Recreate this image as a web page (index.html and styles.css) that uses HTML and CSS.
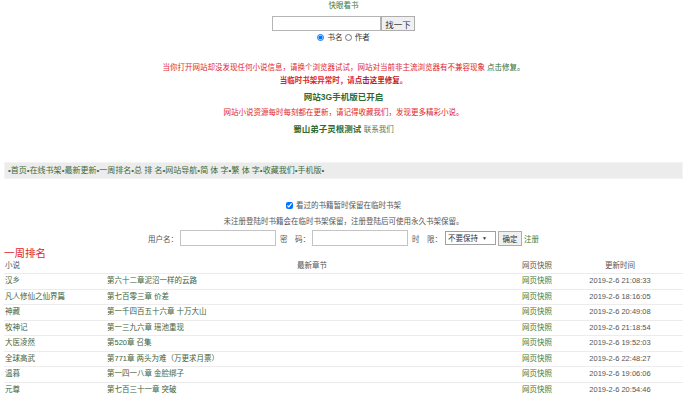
FILE: index.html
```html
<!DOCTYPE html>
<html lang="zh-CN">
<head>
    <meta charset="UTF-8">
    <meta name="viewport" content="width=device-width, initial-scale=1.0">
    <link rel="stylesheet" href="styles.css">
    <title>快眼看书</title>
</head>
<body>
    <div id="header">
        <div class="site-title">快眼看书</div>
        <form class="search">
            <input type="text" class="search-input"><button type="button" class="search-btn">找一下</button>
        </form>
        <div class="search-type">
            <label><input type="radio" name="type" checked> 书名</label>
            <label><input type="radio" name="type"> 作者</label>
        </div>
    </div>

    <div id="notice">
        <p class="red">当你打开网站却没发现任何小说信息，请换个浏览器试试，网站对当前非主流浏览器有不兼容现象 <a href="#" class="green-link">点击修复。</a></p>
        <p class="red bold">当临时书架异常时，请<a href="#" class="red-link">点击这里修复</a>。</p>
        <p class="big green">网站3G手机版已开启</p>
        <p class="red">网站小说资源每时每刻都在更新，请记得收藏我们，发现更多精彩小说。</p>
        <p class="big green">蜀山弟子灵根测试 <a href="#" class="small-link">联系我们</a></p>
    </div>

    <div id="nav">
        •<a href="#">首页</a>•<a href="#">在线书架</a>•<a href="#">最新更新</a>•<a href="#">一周排名</a>•<a href="#">总 排 名</a>•<a href="#">网站导航</a>•<a href="#">简 体 字</a>•<a href="#">繁 体 字</a>•<a href="#">收藏我们</a>•<a href="#">手机版</a>•
    </div>

    <div id="login">
        <div class="keep"><label><input type="checkbox" checked> 看过的书籍暂时保留在临时书架</label></div>
        <div class="tip">未注册登陆时书籍会在临时书架保留，注册登陆后可使用永久书架保留。</div>
        <form class="login-row">
            <span>用户名：</span><input type="text" class="login-input">
            <span>密　码：</span><input type="password" class="login-input">
            <span>时　限：</span>
            <div class="keep-select">不要保持 <span class="arrow">▼</span></div>
            <button type="button" class="login-btn">确定</button><a href="#" class="reg">注册</a>
        </form>
    </div>

    <div id="rank">
        <h2>一周排名</h2>
        <table>
            <tr>
                <th class="c1">小说</th>
                <th class="c2">最新章节</th>
                <th class="c3">网页快照</th>
                <th class="c4">更新时间</th>
            </tr>
            <tr><td class="c1">汉乡</td><td class="c2">第六十二章泥沼一样的云路</td><td class="c3"><a href="#">网页快照</a></td><td class="c4">2019-2-6 21:08:33</td></tr>
            <tr><td class="c1">凡人修仙之仙界篇</td><td class="c2">第七百零三章 价差</td><td class="c3"><a href="#">网页快照</a></td><td class="c4">2019-2-6 18:16:05</td></tr>
            <tr><td class="c1">神藏</td><td class="c2">第一千四百五十六章 十万大山</td><td class="c3"><a href="#">网页快照</a></td><td class="c4">2019-2-6 20:49:08</td></tr>
            <tr><td class="c1">牧神记</td><td class="c2">第一三九六章 瑶池重现</td><td class="c3"><a href="#">网页快照</a></td><td class="c4">2019-2-6 21:18:54</td></tr>
            <tr><td class="c1">大医凌然</td><td class="c2">第520章 召集</td><td class="c3"><a href="#">网页快照</a></td><td class="c4">2019-2-6 19:52:03</td></tr>
            <tr><td class="c1">全球高武</td><td class="c2">第771章 两头为难（万更求月票）</td><td class="c3"><a href="#">网页快照</a></td><td class="c4">2019-2-6 22:48:27</td></tr>
            <tr><td class="c1">温暮</td><td class="c2">第一四一八章 金脸绑子</td><td class="c3"><a href="#">网页快照</a></td><td class="c4">2019-2-6 19:06:06</td></tr>
            <tr><td class="c1">元尊</td><td class="c2">第七百三十一章 突破</td><td class="c3"><a href="#">网页快照</a></td><td class="c4">2019-2-6 20:54:46</td></tr>
        </table>
    </div>
</body>
</html>
```

FILE: styles.css
```css
body {
    margin: 0;
    padding: 0 7px 0 4px;
    font-family: "Liberation Sans", "Noto Sans CJK SC", sans-serif;
    font-size: 7.5px;
    color: #555;
    background: #fff;
}

a {
    text-decoration: none;
}

#header {
    text-align: center;
}

.site-title {
    color: #3b7a3b;
    line-height: 12px;
}

.search {
    margin: 4px 0 0;
    display: flex;
    justify-content: center;
}

.search-input {
    width: 109px;
    height: 15px;
    box-sizing: border-box;
    border: 1px solid #b5b5b5;
    margin: 0;
    padding: 0;
}

.search-btn {
    width: 34px;
    height: 15px;
    box-sizing: border-box;
    border: 1px solid #adadad;
    background: #f0f0f0;
    font-family: inherit;
    font-size: 8.5px;
    color: #333;
    padding: 0;
    margin: 0;
}

.search-type {
    line-height: 11px;
    margin-top: 1px;
    color: #333;
}

.search-type input,
.keep input {
    width: 7px;
    height: 7px;
    margin: 0 1px 0 0;
    vertical-align: -1px;
}

#notice {
    margin-top: 18px;
    text-align: center;
}

#notice p {
    margin: 0;
    line-height: 13px;
}

#notice .red {
    color: #e0262c;
}

#notice .bold {
    font-weight: bold;
}

#notice .big {
    font-weight: bold;
    font-size: 8.5px;
    color: #2f6b2f;
    line-height: 16px;
    margin: 2px 0 1px;
}

.green-link {
    color: #2f6b2f;
}

.red-link {
    color: #c0151c;
}

.small-link {
    font-weight: normal;
    font-size: 7.5px;
    color: #557755;
}

#nav {
    margin-top: 24px;
    height: 15px;
    line-height: 15px;
    background: #ececec;
    border: 1px solid #f4f4f4;
    padding-left: 3px;
    font-size: 8px;
    color: #3a6a3a;
}

#nav a {
    color: #3a6a3a;
}

#login {
    margin-top: 19px;
    text-align: center;
    color: #555;
}

.keep {
    line-height: 16px;
}

.tip {
    line-height: 15px;
}

.login-row {
    margin: 1px 0 0;
    display: flex;
    justify-content: center;
    align-items: center;
    height: 16px;
}

.login-input {
    width: 96px;
    height: 16px;
    box-sizing: border-box;
    border: 1px solid #c4c4c4;
    margin: 0 4px 0 2px;
    padding: 0;
}

.keep-select {
    width: 51px;
    height: 14px;
    line-height: 12px;
    box-sizing: border-box;
    color: #333;
    border: 1px solid #a0a0a0;
    margin: 0 2px 0 3px;
    padding-left: 2px;
    text-align: left;
    background: #fff;
}

.keep-select .arrow {
    font-size: 5px;
    vertical-align: 1px;
    margin-left: 2px;
}

.login-btn {
    width: 24px;
    height: 15px;
    box-sizing: border-box;
    border: 1px solid #adadad;
    background: #f0f0f0;
    font-family: inherit;
    font-size: 7.5px;
    color: #333;
    padding: 0;
    margin: 0 2px 0 0;
}

.reg {
    color: #3a7a3a;
}

#rank {
    margin-top: 1px;
}

#rank h2 {
    margin: 0;
    font-weight: normal;
    font-size: 10.5px;
    line-height: 12px;
    color: #e0262c;
}

#rank table {
    width: 100%;
    border-collapse: collapse;
    table-layout: fixed;
}

#rank th,
#rank td {
    font-weight: normal;
    line-height: 14.5px;
    padding: 0;
    border-bottom: 1px solid #ececec;
    white-space: nowrap;
    overflow: hidden;
}

#rank th {
    color: #555;
    line-height: 14px;
}

#rank td {
    color: #3d5f3d;
}

#rank .c1 {
    width: 100px;
    text-align: left;
    padding-left: 1px;
}

#rank .c2 {
    width: 410px;
    padding-left: 2px;
}

#rank td.c2 {
    text-align: left;
}

#rank .c3 {
    width: 35px;
    text-align: left;
    padding-left: 5px;
}

#rank td.c3 a {
    color: #3a7a3a;
}

#rank .c4 {
    text-align: center;
}

#rank td.c4 {
    color: #555;
}
```
